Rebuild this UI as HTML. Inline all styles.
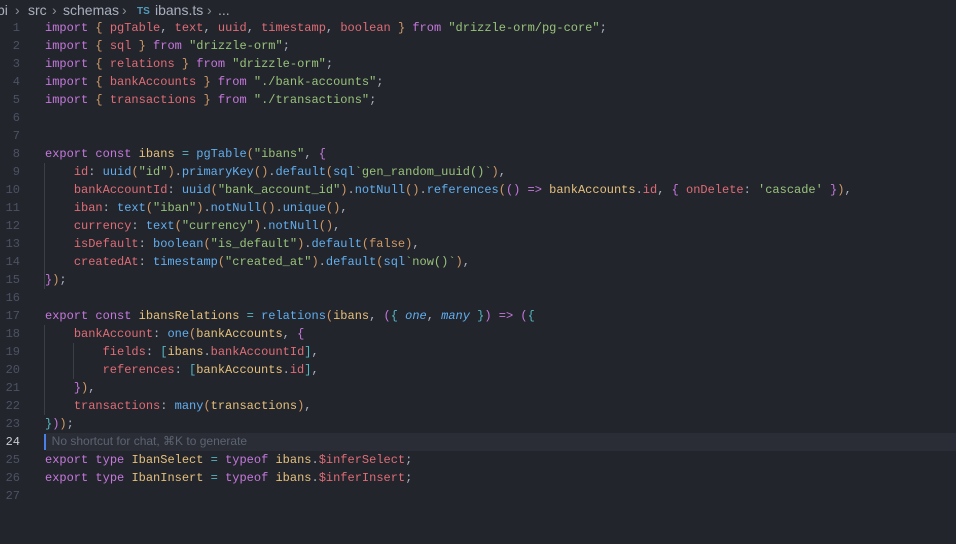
<!DOCTYPE html><html><head><style>
body{margin:0;background:#23252d;width:956px;height:544px;overflow:hidden;}
.bc{position:absolute;top:0;height:20px;line-height:20px;font:14px "Liberation Sans",sans-serif;color:#a9b0bc;white-space:pre;}
.bc span{position:absolute;top:0;line-height:20px}
.code{position:absolute;top:19px;left:0;width:956px;font:12px/18px "Liberation Mono",monospace;color:#abb2bf;}
.l{height:18px;position:relative;padding-left:45px;white-space:pre}
.n{position:absolute;left:0;width:20px;text-align:right;color:#4b5263}
.k{color:#c678dd}.v{color:#e06c75}.s{color:#98c379}.f{color:#61afef}.i{color:#e5c07b}.o{color:#d19a66}.c{color:#56b6c2}.it{font-style:italic}
.g{position:absolute;width:1px;background:#3b3f48}
.ch{color:#8a909b}
</style></head><body>
<div class="bc"><span style="left:-3px">pi</span><span class="ch" style="left:15px">›</span><span style="left:28px">src</span><span class="ch" style="left:52px">›</span><span style="left:63px">schemas</span><span class="ch" style="left:122px">›</span><span style="left:137px;top:2px;color:#519aba;font-size:10px;font-weight:bold;line-height:20px">TS</span><span style="left:155px">ibans.ts</span><span class="ch" style="left:207px">›</span><span style="left:218px">...</span></div>
<div class="g" style="left:44px;top:163px;height:126px"></div>
<div class="g" style="left:44px;top:325px;height:90px"></div>
<div class="g" style="left:73px;top:343px;height:36px"></div>
<div class="code">
<div class="l"><span class="n">1</span><span class="k">import</span> <span class="o">{</span> <span class="v">pgTable</span>, <span class="v">text</span>, <span class="v">uuid</span>, <span class="v">timestamp</span>, <span class="v">boolean</span> <span class="o">}</span> <span class="k">from</span> <span class="s">"drizzle-orm/pg-core"</span>;</div>
<div class="l"><span class="n">2</span><span class="k">import</span> <span class="o">{</span> <span class="v">sql</span> <span class="o">}</span> <span class="k">from</span> <span class="s">"drizzle-orm"</span>;</div>
<div class="l"><span class="n">3</span><span class="k">import</span> <span class="o">{</span> <span class="v">relations</span> <span class="o">}</span> <span class="k">from</span> <span class="s">"drizzle-orm"</span>;</div>
<div class="l"><span class="n">4</span><span class="k">import</span> <span class="o">{</span> <span class="v">bankAccounts</span> <span class="o">}</span> <span class="k">from</span> <span class="s">"./bank-accounts"</span>;</div>
<div class="l"><span class="n">5</span><span class="k">import</span> <span class="o">{</span> <span class="v">transactions</span> <span class="o">}</span> <span class="k">from</span> <span class="s">"./transactions"</span>;</div>
<div class="l"><span class="n">6</span></div>
<div class="l"><span class="n">7</span></div>
<div class="l"><span class="n">8</span><span class="k">export</span> <span class="k">const</span> <span class="i">ibans</span> <span class="c">=</span> <span class="f">pgTable</span><span class="o">(</span><span class="s">"ibans"</span>, <span class="k">{</span></div>
<div class="l"><span class="n">9</span>    <span class="v">id</span>: <span class="f">uuid</span><span class="o">(</span><span class="s">"id"</span><span class="o">)</span>.<span class="f">primaryKey</span><span class="o">()</span>.<span class="f">default</span><span class="o">(</span><span class="f">sql</span><span class="s">`gen_random_uuid()`</span><span class="o">)</span>,</div>
<div class="l"><span class="n">10</span>    <span class="v">bankAccountId</span>: <span class="f">uuid</span><span class="o">(</span><span class="s">"bank_account_id"</span><span class="o">)</span>.<span class="f">notNull</span><span class="o">()</span>.<span class="f">references</span><span class="o">(</span><span class="k">()</span> <span class="k">=&gt;</span> <span class="i">bankAccounts</span>.<span class="v">id</span>, <span class="k">{</span> <span class="v">onDelete</span>: <span class="s">'cascade'</span> <span class="k">}</span><span class="o">)</span>,</div>
<div class="l"><span class="n">11</span>    <span class="v">iban</span>: <span class="f">text</span><span class="o">(</span><span class="s">"iban"</span><span class="o">)</span>.<span class="f">notNull</span><span class="o">()</span>.<span class="f">unique</span><span class="o">()</span>,</div>
<div class="l"><span class="n">12</span>    <span class="v">currency</span>: <span class="f">text</span><span class="o">(</span><span class="s">"currency"</span><span class="o">)</span>.<span class="f">notNull</span><span class="o">()</span>,</div>
<div class="l"><span class="n">13</span>    <span class="v">isDefault</span>: <span class="f">boolean</span><span class="o">(</span><span class="s">"is_default"</span><span class="o">)</span>.<span class="f">default</span><span class="o">(false)</span>,</div>
<div class="l"><span class="n">14</span>    <span class="v">createdAt</span>: <span class="f">timestamp</span><span class="o">(</span><span class="s">"created_at"</span><span class="o">)</span>.<span class="f">default</span><span class="o">(</span><span class="f">sql</span><span class="s">`now()`</span><span class="o">)</span>,</div>
<div class="l"><span class="n">15</span><span class="k">}</span><span class="o">)</span>;</div>
<div class="l"><span class="n">16</span></div>
<div class="l"><span class="n">17</span><span class="k">export</span> <span class="k">const</span> <span class="i">ibansRelations</span> <span class="c">=</span> <span class="f">relations</span><span class="o">(</span><span class="i">ibans</span>, <span class="k">(</span><span class="c">{</span> <span class="f it">one</span>, <span class="f it">many</span> <span class="c">}</span><span class="k">)</span> <span class="k">=&gt;</span> <span class="k">(</span><span class="c">{</span></div>
<div class="l"><span class="n">18</span>    <span class="v">bankAccount</span>: <span class="f">one</span><span class="o">(</span><span class="i">bankAccounts</span>, <span class="k">{</span></div>
<div class="l"><span class="n">19</span>        <span class="v">fields</span>: <span class="c">[</span><span class="i">ibans</span>.<span class="v">bankAccountId</span><span class="c">]</span>,</div>
<div class="l"><span class="n">20</span>        <span class="v">references</span>: <span class="c">[</span><span class="i">bankAccounts</span>.<span class="v">id</span><span class="c">]</span>,</div>
<div class="l"><span class="n">21</span>    <span class="k">}</span><span class="o">)</span>,</div>
<div class="l"><span class="n">22</span>    <span class="v">transactions</span>: <span class="f">many</span><span class="o">(</span><span class="i">transactions</span><span class="o">)</span>,</div>
<div class="l"><span class="n">23</span><span class="c">}</span><span class="k">)</span><span class="o">)</span>;</div>
<div class="l"><span style="position:absolute;left:46px;right:0;top:0;height:18px;background:#2a2d35"></span><span class="n" style="color:#c8cbd0">24</span><span style="position:absolute;left:44px;top:1px;width:2px;height:16px;background:#4a7fe8"></span><span style="position:relative;font:12px 'Liberation Sans',sans-serif;color:#5c6370">  No shortcut for chat, ⌘K to generate</span></div>
<div class="l"><span class="n">25</span><span class="k">export</span> <span class="k">type</span> <span class="i">IbanSelect</span> <span class="c">=</span> <span class="k">typeof</span> <span class="i">ibans</span>.<span class="v">$inferSelect</span>;</div>
<div class="l"><span class="n">26</span><span class="k">export</span> <span class="k">type</span> <span class="i">IbanInsert</span> <span class="c">=</span> <span class="k">typeof</span> <span class="i">ibans</span>.<span class="v">$inferInsert</span>;</div>
<div class="l"><span class="n">27</span></div>
</div>
</body></html>
